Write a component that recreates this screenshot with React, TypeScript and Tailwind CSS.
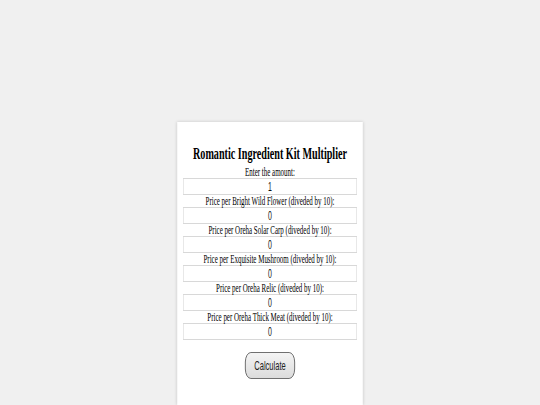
import React, { useState } from 'react';

const items = [
    'Bright Wild Flower',
    'Oreha Solar Carp',
    'Exquisite Mushroom',
    'Oreha Relic',
    'Oreha Thick Meat',
];

export default function App() {
    const [amount, setAmount] = useState('1');
    const [prices, setPrices] = useState<string[]>(items.map(() => '0'));

    return (
        <div className="h-[405px] overflow-hidden bg-[#f0f0f0] flex justify-center pt-[122px]">
            <div className="w-[320px] shrink-0 origin-top scale-x-[0.58] bg-white shadow-[0_0_4px_rgba(0,0,0,0.18)] px-[10px] pt-[21px] pb-[40px] font-['Liberation_Serif',serif] text-black">
                <h1 className="text-center text-[17.5px] leading-[20px] font-bold mb-[3px]">
                    Romantic Ingredient Kit Multiplier
                </h1>
                <label className="block text-center text-[12px] leading-[12px]">Enter the amount:</label>
                <input
                    value={amount}
                    onChange={(e) => setAmount(e.target.value)}
                    className="block w-full h-[17px] p-0 leading-[15px] border border-[#d8d8d8] text-center text-[12px] text-[#111] font-['Liberation_Sans',sans-serif] outline-none"
                />
                {items.map((name, i) => (
                    <div key={name}>
                        <label className="block text-center text-[12px] leading-[12px]">
                            Price per {name} (diveded by 10):
                        </label>
                        <input
                            value={prices[i]}
                            onChange={(e) => setPrices(prices.map((p, j) => (j === i ? e.target.value : p)))}
                            className="block w-full h-[17px] p-0 leading-[15px] border border-[#d8d8d8] text-center text-[12px] text-[#111] font-['Liberation_Sans',sans-serif] outline-none"
                        />
                    </div>
                ))}
                <div className="flex justify-center mt-[12px]">
                    <button className="h-[27px] w-[86px] rounded-[10px] border-[1.5px] border-[#4a4a4a] bg-gradient-to-b from-[#f4f4f4] to-[#dcdcdc] text-[13px] font-['Liberation_Sans',sans-serif] text-[#222]">
                        Calculate
                    </button>
                </div>
            </div>
        </div>
    );
}
